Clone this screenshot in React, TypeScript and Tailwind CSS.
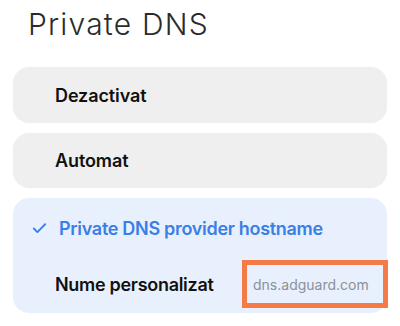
import { Check } from 'lucide-react';

const FONT = { fontFamily: 'Inter, "Noto Sans", sans-serif' };

export default function App() {
  return (
    <div className="h-[326px] w-[400px] overflow-hidden bg-white px-[13px]" style={FONT}>
      {/* Title */}
      <h1 className="pl-[15px] pt-[6px] text-[30px] font-light leading-[36px] tracking-[1.2px] text-[#2b2b2b]">
        Private DNS
      </h1>

      <div className="mt-[25px] flex flex-col gap-[10px]">
        {/* Off */}
        <div className="flex h-[56px] items-center rounded-[16px] bg-[#efefef] pl-[42px]">
          <span className="text-[18px] font-semibold tracking-[-0.1px] text-[#111]">Dezactivat</span>
        </div>

        {/* Automatic */}
        <div className="flex h-[55px] items-center rounded-[16px] bg-[#efefef] pl-[42px]">
          <span className="text-[18px] font-semibold tracking-[-0.1px] text-[#111]">Automat</span>
        </div>

        {/* Hostname (selected) */}
        <div className="flex flex-col rounded-[16px] bg-[#e8f0fd] pb-[5px]">
          <div className="flex h-[60px] items-center gap-[11px] pl-[18px]">
            <Check className="h-[17px] w-[17px] text-[#3a7ee8]" strokeWidth={2.6} />
            <span className="text-[18px] font-semibold tracking-[-0.3px] text-[#3a7ee8]">
              Private DNS provider hostname
            </span>
          </div>
          <div className="mt-[2px] flex items-center justify-between pl-[42px]">
            <span className="text-[18px] font-semibold tracking-[-0.3px] text-[#111]">Nume personalizat</span>
            <div className="-mr-px flex h-[48px] w-[146px] items-center border-[5px] border-[#f47b45] pl-[6px]">
              <span className="text-[14px] text-[#8b9099]">dns.adguard.com</span>
            </div>
          </div>
        </div>
      </div>
    </div>
  );
}
